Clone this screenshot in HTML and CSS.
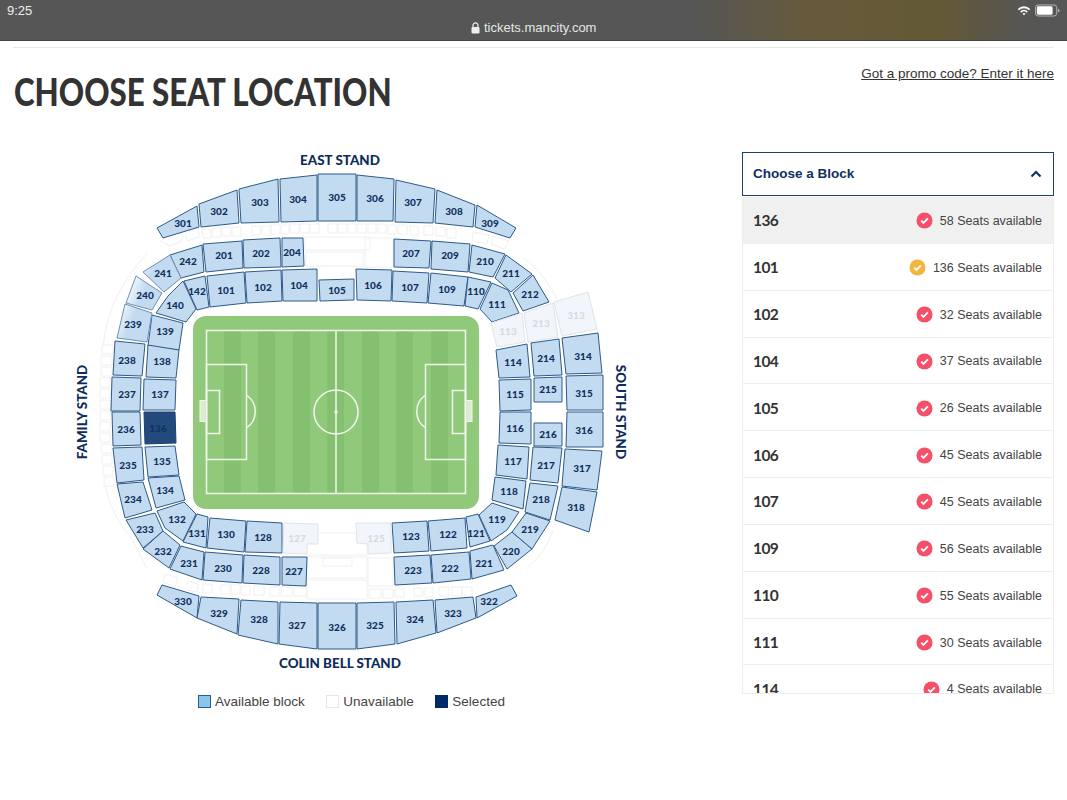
FILE: index.html
```html
<!DOCTYPE html>
<html lang="en">
<head>
<meta charset="utf-8">
<title>Choose seat location</title>
<link rel="stylesheet" href="styles.css">
</head>
<body>
<header class="status">
  <span class="time">9:25</span>
  <span class="address">
    <svg class="lock" viewBox="0 0 9 12"><path d="M2 5V3.4a2.5 2.5 0 0 1 5 0V5" fill="none" stroke="#eee" stroke-width="1.2"/><rect x="0.5" y="5" width="8" height="6.5" rx="1" fill="#eee"/></svg>
    tickets.mancity.com
  </span>
  <span class="indicators">
    <svg class="wifi" viewBox="0 0 16 12"><path d="M0.8 4.2a10 10 0 0 1 14.4 0l-1.5 1.5a8 8 0 0 0-11.4 0zM3.6 7a6 6 0 0 1 8.8 0l-1.5 1.5a4 4 0 0 0-5.8 0zM6.3 9.6a2.4 2.4 0 0 1 3.4 0L8 11.5z" fill="#fff"/></svg>
    <svg class="battery" viewBox="0 0 27 13"><rect x="0.5" y="0.5" width="23" height="12" rx="3" fill="none" stroke="#bbb"/><rect x="2" y="2" width="17" height="9" rx="1.5" fill="#fff"/><path d="M25 4.5c1 .3 1.5 1 1.5 2s-.5 1.700-1.500 2z" fill="#bbb"/></svg>
  </span>
</header>

<main class="page">
  <div class="rule"></div>
  <div class="title-row">
    <h1>CHOOSE SEAT LOCATION</h1>
    <a class="promo" href="#">Got a promo code? Enter it here</a>
  </div>

  <div class="content">
    <section class="map">
      <svg class="stadium" viewBox="70 150 570 530" width="570" height="530">
        <defs>
          <linearGradient id="fade" gradientUnits="userSpaceOnUse" x1="126" y1="295" x2="140" y2="301">
            <stop offset="0" stop-color="#f4f8fc"/>
            <stop offset="1" stop-color="#c2dbf1"/>
          </linearGradient>
        </defs>

        <g class="ghost">
          <path d="M161 241l6-5 14-4 1 9-12 5zM185 231l13-3 1 9-12 4zM202 229h9v9h-8zM212 228h9v9h-9zM222 227h9v9h-9zM232 227h9v9h-9zM252 226h8v9h-8zM262 226h8v9h-8zM271 225h9v9h-9zM281 225h8v9h-8zM290 224h9v9h-9zM300 224h9v9h-9zM310 224h9v9h-9zM328 224h9v9h-9zM338 224h8v9h-8zM348 224h8v9h-8zM358 224h8v9h-8zM368 224h8v9h-8zM378 224h8v9h-8zM388 225h8v9h-8zM398 225h9v9h-9zM410 226h8v9h-8zM424 226h9v9h-9zM436 227h9v9h-9zM447 228h9v10h-9zM473 232l16 3-2 9-15-3zM493 236l16 5-5 8-13-5z"/>
          <path d="M305 237h65v13h-65zM306 252h57v14h-57zM365 238h28v29h-28z"/>
          <path d="M319 533h36l12 11v11h-60v-11zM307 557h60v21h-60zM323 558h29v8h-29zM368 558h25v28h-25zM307 580h60v19h-60z"/>
          <path d="M369 589h12v9h-12zM383 589h10v9h-10zM395 589h9v8h-9zM414 588h8v8h-8zM424 588h9v9h-9zM439 587h10v9h-10zM452 587h10v9h-10zM462 587h10v8h-10z"/>
          <path d="M165 574l13 4-3 9-12-5zM188 581l10 3-1 8-11-2zM203 584h9v9h-9zM221 585h9v9h-9zM231 585h9v9h-9zM241 586h9v9h-9zM254 586h10v9h-10zM270 587h9v9h-9zM281 587h11v9h-11zM294 587h12v9h-12z"/>
          <path d="M148 253c-25 25-43 60-45 97M105 483c3 20 13 40 28 58l14 28M523 257c15 12 28 28 34 43M527 568c12-10 22-24 26-38"/>
          <path d="M102 345h11v9h-11zM101 356h11v9h-11zM101 367h11v9h-11zM100 378h10v9h-10zM100 389h10v9h-10zM100 400h10v9h-10zM100 411h10v9h-10zM100 422h10v9h-10zM100 433h10v9h-10zM101 444h11v9h-11zM102 455h10v9h-10zM103 466h10v9h-10zM104 477h10v9h-10z"/>
        </g>

        <g class="blk">
          <polygon points="157,228 197,206 199,227 163,238"/>
          <polygon points="199,204 237,190 239,223 201,227"/>
          <polygon points="239,189 278,179 279,222 241,223"/>
          <polygon points="280,179 317,175 317,221 281,222"/>
          <polygon points="318,174 356,174 356,221 318,221"/>
          <polygon points="357,175 394,179 393,221 357,221"/>
          <polygon points="396,180 435,189 433,223 395,222"/>
          <polygon points="437,190 475,205 473,227 435,223"/>
          <polygon points="477,205 516,228 510,238 475,227"/>
          <polygon points="170,255 202,245 204,272 181,278"/>
          <polygon points="203,244 242,241 243,268 206,272"/>
          <polygon points="243,240 280,238 281,267 244,268"/>
          <polygon points="282,238 303,238 304,266 282,267"/>
          <polygon points="394,239 431,241 429,268 394,267"/>
          <polygon points="432,241 470,244 468,272 431,269"/>
          <polygon points="472,245 505,254 493,277 469,272"/>
          <polygon points="506,255 532,274 511,292 495,278"/>
          <polygon points="533,275 549,302 523,311 513,293"/>
          <polygon points="156,313 168,296 183,281 196,309 186,322"/>
          <polygon points="184,281 205,276 209,307 197,310"/>
          <polygon points="207,276 244,272 246,303 210,307"/>
          <polygon points="245,272 281,270 282,301 247,303"/>
          <polygon points="282,270 317,269 317,301 283,301"/>
          <polygon points="319,280 354,279 354,300 320,301"/>
          <polygon points="356,269 392,270 391,301 357,300"/>
          <polygon points="393,271 429,273 427,303 392,301"/>
          <polygon points="431,273 468,277 464,306 428,303"/>
          <polygon points="468,277 491,282 478,309 465,306"/>
          <polygon points="492,283 508,290 519,313 492,322 480,309"/>
          <polygon points="152,315 183,323 179,350 148,346"/>
          <polygon points="115,341 145,344 142,376 113,375"/>
          <polygon points="148,345 179,350 176,378 146,377"/>
          <polygon points="112,377 141,378 140,411 111,411"/>
          <polygon points="144,379 176,380 175,410 143,410"/>
          <polygon points="112,412 140,412 141,445 113,446"/>
          <polygon points="113,448 142,447 144,480 117,483"/>
          <polygon points="145,447 175,446 179,475 148,477"/>
          <polygon points="117,484 143,482 152,510 125,518"/>
          <polygon points="148,478 179,476 185,500 156,508"/>
          <polygon points="126,520 155,513 163,531 143,548"/>
          <polygon points="157,511 184,502 196,514 183,541 165,528"/>
          <polygon points="197,514 208,517 206,548 183,542"/>
          <polygon points="210,518 246,521 244,552 207,548"/>
          <polygon points="247,521 282,523 282,553 245,552"/>
          <polygon points="163,531 180,545 169,568 143,549"/>
          <polygon points="181,546 204,552 202,580 170,569"/>
          <polygon points="205,552 243,555 242,583 203,580"/>
          <polygon points="244,555 280,557 280,585 243,583"/>
          <polygon points="282,557 307,557 306,586 282,585"/>
          <polygon points="394,557 430,555 432,583 395,585"/>
          <polygon points="431,555 469,552 471,579 433,583"/>
          <polygon points="470,551 493,545 504,570 472,579"/>
          <polygon points="494,546 512,532 532,549 507,569"/>
          <polygon points="512,532 526,513 550,521 532,549"/>
          <polygon points="530,483 558,486 550,520 525,512"/>
          <polygon points="533,447 562,448 558,483 530,480"/>
          <polygon points="534,423 562,423 562,446 534,446"/>
          <polygon points="534,378 562,377 562,402 534,402"/>
          <polygon points="531,343 559,339 562,375 534,376"/>
          <polygon points="562,338 598,333 602,373 566,374"/>
          <polygon points="566,376 603,375 603,410 567,410"/>
          <polygon points="567,412 603,412 603,447 566,447"/>
          <polygon points="565,449 602,451 597,490 562,486"/>
          <polygon points="562,487 597,492 589,532 555,520"/>
          <polygon points="496,350 527,344 530,377 499,378"/>
          <polygon points="499,380 531,379 531,410 500,411"/>
          <polygon points="500,412 531,412 531,444 499,443"/>
          <polygon points="498,445 529,447 527,479 496,475"/>
          <polygon points="495,477 526,481 523,509 492,500"/>
          <polygon points="492,503 519,512 507,530 491,541 479,515"/>
          <polygon points="466,517 478,514 490,541 470,547"/>
          <polygon points="428,521 465,518 467,548 431,551"/>
          <polygon points="392,523 427,521 429,551 394,553"/>
          <polygon points="476,597 511,585 517,596 477,618"/>
          <polygon points="435,600 473,597 476,618 437,633"/>
          <polygon points="396,602 433,600 436,633 397,644"/>
          <polygon points="357,603 394,602 395,644 357,649"/>
          <polygon points="318,603 356,603 356,649 318,649"/>
          <polygon points="280,602 317,603 317,649 279,644"/>
          <polygon points="241,600 278,602 278,644 238,635"/>
          <polygon points="201,597 239,599 237,634 197,618"/>
          <polygon points="162,585 199,596 197,618 157,595"/>
        </g>
        <g class="blk fading">
          <polygon points="170,255 181,278 164,292 143,272"/>
          <polygon points="126,303 136,276 162,293 152,310"/>
          <polygon points="125,304 152,313 147,342 117,338"/>
        </g>
        <polygon class="sel" points="144,412 175,412 176,443 145,444"/>
        <g class="off">
          <polygon points="491,323 522,313 525,342 497,347"/>
          <polygon points="524,313 553,303 558,337 528,342"/>
          <polygon points="554,302 588,292 597,329 562,336"/>
          <polygon points="356,523 391,523 391,553 368,554 368,544 357,543"/>
          <polygon points="284,523 318,524 318,544 307,544 307,554 283,553"/>
        </g>

        <rect class="turf" x="193" y="316" width="286" height="193" rx="13"/>
        <g class="stripes">
          <rect x="224" y="331" width="17" height="163"/>
          <rect x="258" y="331" width="17" height="163"/>
          <rect x="293" y="331" width="17" height="163"/>
          <rect x="327" y="331" width="17" height="163"/>
          <rect x="362" y="331" width="17" height="163"/>
          <rect x="396" y="331" width="17" height="163"/>
          <rect x="431" y="331" width="17" height="163"/>
        </g>
        <g class="lines">
          <rect x="206.500" y="330.500" width="259" height="163"/>
          <path d="M336 330.500v163"/>
          <circle cx="336" cy="412" r="22"/>
          <rect x="206.500" y="364.500" width="40" height="95"/>
          <rect x="206.500" y="390.500" width="13" height="43"/>
          <rect x="425.500" y="364.500" width="40" height="95"/>
          <rect x="452.500" y="390.500" width="13" height="43"/>
          <path d="M246.500 395a20 20 0 0 1 0 33M425.500 395a20 20 0 0 0 0 33"/>
        </g>
        <circle class="spot" cx="336" cy="412" r="1.800"/>
        <rect class="goal" x="200" y="400.500" width="6.500" height="21"/>
        <rect class="goal" x="465.500" y="400.500" width="6.500" height="21"/>

        <g class="stand">
          <text x="340" y="165">EAST STAND</text>
          <text x="340" y="668">COLIN BELL STAND</text>
          <text transform="translate(87 412) rotate(-90)">FAMILY STAND</text>
          <text transform="translate(616 412) rotate(90)">SOUTH STAND</text>
        </g>

        <g class="num">
          <text x="183" y="227">301</text><text x="219" y="215">302</text><text x="260" y="206">303</text><text x="298" y="203">304</text><text x="337" y="201">305</text><text x="375" y="202">306</text><text x="413" y="206">307</text><text x="454" y="215">308</text><text x="490" y="227">309</text>
          <text x="188" y="265">242</text><text x="224" y="259">201</text><text x="261" y="257">202</text><text x="292" y="256">204</text><text x="411" y="257">207</text><text x="450" y="259">209</text><text x="485" y="265">210</text><text x="511" y="277">211</text><text x="530" y="298">212</text>
          <text x="163" y="277">241</text><text x="145" y="299">240</text><text x="133" y="328">239</text><text x="127" y="364">238</text><text x="127" y="398">237</text><text x="126" y="433">236</text><text x="128" y="469">235</text><text x="133" y="503">234</text><text x="145" y="533">233</text><text x="163" y="555">232</text><text x="189" y="567">231</text><text x="223" y="572">230</text><text x="261" y="574">228</text><text x="294" y="575">227</text>
          <text x="413" y="574">223</text><text x="450" y="572">222</text><text x="484" y="567">221</text><text x="511" y="555">220</text><text x="530" y="533">219</text><text x="541" y="503">218</text><text x="546" y="469">217</text><text x="548" y="438">216</text><text x="548" y="393">215</text><text x="546" y="362">214</text>
          <text x="583" y="360">314</text><text x="584" y="397">315</text><text x="584" y="434">316</text><text x="582" y="472">317</text><text x="576" y="511">318</text>
          <text x="175" y="309">140</text><text x="197" y="295">142</text><text x="226" y="294">101</text><text x="263" y="291">102</text><text x="299" y="289">104</text><text x="337" y="294">105</text><text x="373" y="289">106</text><text x="410" y="291">107</text><text x="447" y="293">109</text><text x="476" y="295">110</text><text x="497" y="308">111</text>
          <text x="513" y="366">114</text><text x="515" y="398">115</text><text x="515" y="432">116</text><text x="513" y="465">117</text><text x="509" y="495">118</text><text x="497" y="523">119</text><text x="476" y="537">121</text><text x="448" y="538">122</text><text x="411" y="540">123</text>
          <text x="263" y="541">128</text><text x="226" y="538">130</text><text x="197" y="537">131</text><text x="177" y="523">132</text><text x="165" y="494">134</text><text x="162" y="465">135</text><text x="158" y="432">136</text><text x="160" y="398">137</text><text x="162" y="365">138</text><text x="165" y="335">139</text>
          <text x="489" y="605">322</text><text x="453" y="617">323</text><text x="415" y="623">324</text><text x="375" y="629">325</text><text x="337" y="631">326</text><text x="297" y="629">327</text><text x="259" y="623">328</text><text x="219" y="617">329</text><text x="183" y="605">330</text>
        </g>
        <g class="num dim">
          <text x="508" y="335">113</text><text x="541" y="327">213</text><text x="576" y="319">313</text><text x="376" y="542">125</text><text x="297" y="542">127</text>
        </g>
      </svg>

      <div class="legend">
        <span class="key"><i class="swatch avail"></i>Available block</span>
        <span class="key"><i class="swatch none"></i>Unavailable</span>
        <span class="key"><i class="swatch chosen"></i>Selected</span>
      </div>
    </section>

    <aside class="picker">
      <div class="picker-head">
        <span>Choose a Block</span>
        <svg class="chevron" viewBox="0 0 12 8"><path d="M1.500 6.500L6 2l4.500 4.500" fill="none" stroke="#0f2f63" stroke-width="2"/></svg>
      </div>
      <svg class="defs-only" width="0" height="0">
        <symbol id="tick" viewBox="0 0 18 18">
          <circle cx="9" cy="9" r="8.500" fill="currentColor"/>
          <path d="M5.500 9.200l2.400 2.300 4.700-4.700" fill="none" stroke="#fff" stroke-width="2"/>
        </symbol>
      </svg>
      <ul class="rows">
        <li class="row current"><b>136</b><span class="seats"><svg class="tick red"><use href="#tick"/></svg>58 Seats available</span></li>
        <li class="row"><b>101</b><span class="seats"><svg class="tick amber"><use href="#tick"/></svg>136 Seats available</span></li>
        <li class="row"><b>102</b><span class="seats"><svg class="tick red"><use href="#tick"/></svg>32 Seats available</span></li>
        <li class="row"><b>104</b><span class="seats"><svg class="tick red"><use href="#tick"/></svg>37 Seats available</span></li>
        <li class="row"><b>105</b><span class="seats"><svg class="tick red"><use href="#tick"/></svg>26 Seats available</span></li>
        <li class="row"><b>106</b><span class="seats"><svg class="tick red"><use href="#tick"/></svg>45 Seats available</span></li>
        <li class="row"><b>107</b><span class="seats"><svg class="tick red"><use href="#tick"/></svg>45 Seats available</span></li>
        <li class="row"><b>109</b><span class="seats"><svg class="tick red"><use href="#tick"/></svg>56 Seats available</span></li>
        <li class="row"><b>110</b><span class="seats"><svg class="tick red"><use href="#tick"/></svg>55 Seats available</span></li>
        <li class="row"><b>111</b><span class="seats"><svg class="tick red"><use href="#tick"/></svg>30 Seats available</span></li>
        <li class="row"><b>114</b><span class="seats"><svg class="tick red"><use href="#tick"/></svg>4 Seats available</span></li>
      </ul>
    </aside>
  </div>
</main>
</body>
</html>
```

FILE: styles.css
```css
* { box-sizing: border-box; }
html, body { margin: 0; padding: 0; }
body {
  width: 1067px;
  height: 800px;
  overflow: hidden;
  background: #fff;
  font-family: "Liberation Sans", Arial, sans-serif;
  color: #333;
}

.status {
  height: 41px;
  position: relative;
  display: flex;
  justify-content: space-between;
  padding: 3px 7px 0 7px;
  color: #eee;
  font-size: 13px;
  line-height: 15px;
  background: linear-gradient(90deg, #555655 0, #555655 65%, #665a3a 76%, #635836 88%, #565655 96%, #555655 100%);
  border-bottom: 1px solid #444;
}
.address {
  position: absolute;
  left: 471px;
  top: 20px;
  display: flex;
  align-items: center;
  gap: 4px;
  font-size: 13px;
  color: #e6e6e6;
}
.lock { width: 9px; height: 12px; }
.indicators { display: flex; align-items: center; gap: 4px; height: 15px; }
.wifi { width: 14px; height: 11px; }
.battery { width: 25px; height: 13px; }

.page { padding: 0 13px; }
.rule { height: 1px; margin-top: 6px; background: #e9e9e9; }
.title-row {
  height: 102px;
  display: flex;
  justify-content: space-between;
  align-items: flex-start;
}
h1 {
  margin: 22px 0 0 1px;
  font-family: Lato, sans-serif;
  font-size: 37px;
  line-height: 44px;
  font-weight: 900;
  color: #333;
  white-space: nowrap;
  transform: scaleX(0.845);
  transform-origin: 0 50%;
}
.promo {
  margin-top: 18px;
  font-size: 13.500px;
  line-height: 16px;
  color: #333;
  text-decoration: underline;
}

.content { display: flex; justify-content: space-between; align-items: flex-start; }
.map { margin-left: 57px; }
.stadium { display: block; }

.ghost path { fill: #fff; stroke: #f0f0f0; stroke-width: 1; }
.ghost path:nth-child(6) { fill: none; }
.blk polygon { fill: #c2dbf1; stroke: #2f5a88; stroke-width: 1; }
.fading polygon { fill: url(#fade); stroke: #6f90b4; }
.sel { fill: #234a7d; stroke: #1c3f70; stroke-width: 1; }
.off polygon { fill: #f2f6fb; stroke: #dfe4ea; stroke-width: 1; }
.turf { fill: #91c97b; }
.stripes rect { fill: #84c06f; }
.lines rect, .lines circle, .lines path { fill: none; stroke: #f1f7ec; stroke-width: 1.500; }
.spot { fill: #f1f7ec; }
.goal { fill: #dcecd3; stroke: #f1f7ec; stroke-width: 1; }

.stand text {
  font-family: Lato, sans-serif;
  font-weight: 900;
  font-size: 13.400px;
  fill: #0d2c5a;
  text-anchor: middle;
}
.num text {
  font-family: Lato, sans-serif;
  font-weight: 900;
  font-size: 10px;
  fill: #11305e;
  text-anchor: middle;
}
.dim text { fill: #d5dbe4; }

.legend {
  margin: 13px 0 0 128px;
  display: flex;
  gap: 21.500px;
  font-size: 13.500px;
  line-height: 17px;
  color: #444;
}
.key { display: flex; align-items: center; gap: 4px; }
.swatch { display: block; width: 13px; height: 13px; }
.avail { background: #8cc4ec; border: 1px solid #2a5d94; }
.none { background: #fff; border: 1px solid #e6e6e6; }
.chosen { background: #002a67; }

.picker { width: 312px; margin-top: 2px; }
.picker-head {
  height: 44px;
  margin-bottom: 1px;
  display: flex;
  align-items: center;
  justify-content: space-between;
  padding: 0 11px 1px 10px;
  border: 1.500px solid #1d3f73;
  font-size: 13.500px;
  font-weight: 700;
  color: #0f2f63;
}
.chevron { width: 12px; height: 8px; }
.defs-only { display: block; }
.rows {
  list-style: none;
  margin: 0;
  padding: 0;
  height: 497px;
  overflow: hidden;
  border: solid #efefef;
  border-width: 0 1px 1px;
}
.row {
  height: 46.850px;
  display: flex;
  align-items: center;
  justify-content: space-between;
  padding: 1px 11px 0 10px;
  border-bottom: 1.500px solid #efefef;
}
.current { background: #f0f0f0; }
.row b {
  font-family: Lato, sans-serif;
  font-size: 15.500px;
  font-weight: 700;
  letter-spacing: -0.600px;
  color: #333;
}
.seats {
  display: flex;
  align-items: center;
  gap: 7px;
  padding-top: 1px;
  font-size: 12.500px;
  color: #444;
}
.tick { width: 17px; height: 17px; }
.red { color: #f4506a; }
.amber { color: #f3b53f; }
```
